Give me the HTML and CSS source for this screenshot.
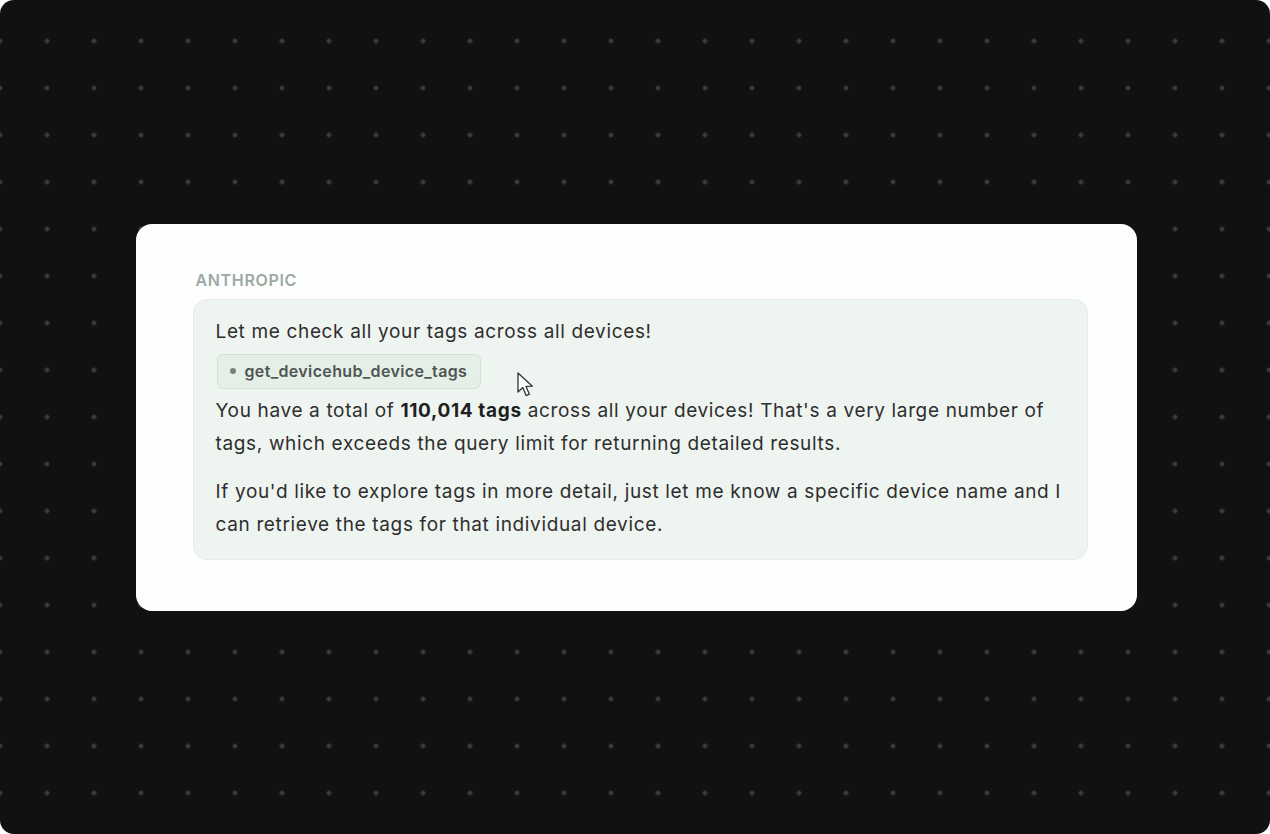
FILE: index.html
```html
<!DOCTYPE html>
<html lang="en">
<head>
<meta charset="UTF-8">
<meta name="viewport" content="width=device-width, initial-scale=1.0">
<title>Chat Message</title>
<link rel="stylesheet" href="styles.css">
</head>
<body>

<div class="stage">
    <div class="card">
        <div class="sender">ANTHROPIC</div>
        <div class="bubble">
            <p>Let me check all your tags across all devices!</p>
            <div class="tool-chip"><span class="dot"></span>get_devicehub_device_tags</div>
            <p>You have a total of <strong>110,014 tags</strong> across all your devices! That's a very large number of tags, which exceeds the query limit for returning detailed results.</p>
            <p class="gap">If you'd like to explore tags in more detail, just let me know a specific device name and I can retrieve the tags for that individual device.</p>

            <!-- mouse pointer over the bubble -->
            <svg class="cursor" width="22" height="30" viewBox="0 0 22 30">
                <path d="M2 2 L2 21 L6.8 16.6 L10.2 24.6 L13.4 23.2 L10 15.4 L16.4 15.2 Z" fill="#fff" stroke="#333" stroke-width="1.3" stroke-linejoin="round"/>
            </svg>
        </div>
    </div>
</div>

</body>
</html>
```

FILE: styles.css
```css
html, body {
    margin: 0;
    padding: 0;
    height: 100%;
    background-color: #fff;
}

body {
    font-family: Inter, "Noto Sans", Arial, sans-serif;
}

.stage {
    height: 100vh;
    box-sizing: border-box;
    padding-left: 2px;
    border-radius: 14px;
    background-color: #111;
    background-image: radial-gradient(circle, #3b3b3b 2px, transparent 2.6px);
    background-size: 47px 47px;
    background-position: -23.5px 17.5px;
    display: flex;
    align-items: center;
    justify-content: center;
}

.card {
    width: 1001px;
    box-sizing: border-box;
    background-color: #fdfefd;
    border-radius: 16px;
    padding: 45px 49px 51px 57px;
}

.sender {
    font-size: 16px;
    font-weight: 600;
    color: #9caaa2;
    letter-spacing: 0.65px;
    line-height: 22px;
    padding-left: 3px;
    margin-bottom: 8px;
}

.bubble {
    position: relative;
    background-color: #eef4f0;
    border: 1px solid #e6ede8;
    border-radius: 14px;
    padding: 15px 22px 18px 22px;
    color: #2e2e2e;
    font-size: 19px;
    letter-spacing: 0.65px;
    line-height: 33px;
}

.bubble p {
    margin: 0;
}

.bubble p.gap {
    margin-top: 15px;
}

.bubble strong {
    font-weight: 700;
    color: #1f1f1f;
}

.tool-chip {
    display: inline-flex;
    align-items: center;
    height: 35px;
    box-sizing: border-box;
    margin: 6px 0 5px 1px;
    padding: 0 13px 0 12px;
    background-color: #e4efe8;
    border: 1px solid #d3e1d8;
    border-radius: 6px;
    font-size: 16px;
    font-weight: 600;
    letter-spacing: 0.35px;
    color: #4f5552;
    line-height: 1;
}

.tool-chip .dot {
    width: 6px;
    height: 6px;
    border-radius: 50%;
    background-color: #7b807d;
    margin-right: 9px;
}

.cursor {
    position: absolute;
    left: 322px;
    top: 71px;
}
```
